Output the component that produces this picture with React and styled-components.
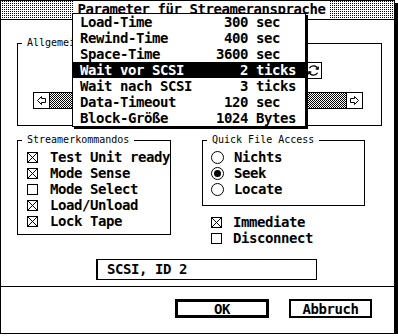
import React from 'react';
import styled, { createGlobalStyle, css } from 'styled-components';

const GlobalStyle = createGlobalStyle`
  html, body {
    margin: 0;
    padding: 0;
    background: #fff;
  }
  body {
    font-family: "DejaVu Sans Mono", "Liberation Mono", monospace;
    color: #000;
  }
`;

// Atari 8x16 system font, approximated
const sysFont = css`
  font-family: "DejaVu Sans Mono", "Liberation Mono", monospace;
  font-weight: bold;
  font-size: 14px;
  letter-spacing: -0.43px;
  line-height: 16px;
`;

const smallFont = css`
  font-family: "DejaVu Sans Mono", "Liberation Mono", monospace;
  font-weight: normal;
  font-size: 10px;
  line-height: 10px;
  letter-spacing: 0;
`;

const dots = css`
  background: conic-gradient(#000 0 25%, #fff 0 100%) 0 0 / 2px 2px;
`;

const checker = css`
  background: repeating-conic-gradient(#000 0 25%, #fff 0 50%) 0 0 / 2px 2px;
`;

const Window = styled.div`
  position: relative;
  width: 395px;
  height: 334px;
  box-sizing: border-box;
  border: 1px solid #000;
  box-shadow: 3px 3px 0 #000;
  background: #fff;
  display: flex;
  flex-direction: column;
`;

const TitleBar = styled.div`
  height: 19px;
  box-sizing: border-box;
  border-bottom: 1px solid #000;
  ${dots};
  display: flex;
  justify-content: center;
`;

const TitleLabel = styled.div`
  ${sysFont};
  height: 18px;
  line-height: 17px;
  padding: 0 4px;
  margin-left: 8px;
  background: #fff;
  white-space: pre;
`;

const Content = styled.div`
  padding-left: 16px;
  display: flex;
  flex-direction: column;
  align-items: flex-start;
`;

const Group = styled.fieldset`
  margin: ${p => p.$top}px 0 0 0;
  padding: 0;
  min-inline-size: 0;
  width: ${p => p.$w}px;
  box-sizing: border-box;
  border: 1px solid #000;
`;

const Legend = styled.legend`
  ${smallFont};
  padding: 0 5px;
  margin-left: 4px;
  white-space: pre;
`;

const GroupBody = styled.div`
  padding: ${p => p.$pad};
  display: flex;
  flex-direction: column;
`;

const PopupRow = styled.div`
  display: flex;
  margin-left: 54px;
`;

const PopupField = styled.div`
  width: 233px;
  height: 17px;
  box-sizing: border-box;
  border: 1px solid #000;
`;

const CycleButton = styled.div`
  width: 17px;
  height: 17px;
  box-sizing: border-box;
  border: 1px solid #000;
  display: flex;
  align-items: center;
  justify-content: center;
`;

const Slider = styled.div`
  display: flex;
  margin: 13px 0 0 15px;
  width: 330px;
  height: 17px;
`;

const ArrowButton = styled.div`
  width: 17px;
  box-sizing: border-box;
  border: 1px solid #000;
  display: flex;
  align-items: center;
  justify-content: center;
`;

const Track = styled.div`
  flex: 1;
  border-top: 1px solid #000;
  border-bottom: 1px solid #000;
  ${checker};
`;

const Columns = styled.div`
  display: flex;
  align-items: flex-start;
`;

const RightColumn = styled.div`
  margin-left: 31px;
  display: flex;
  flex-direction: column;
`;

const OptionRow = styled.div`
  ${sysFont};
  height: 16px;
  display: flex;
  align-items: center;
  gap: ${p => p.$gap}px;
  white-space: pre;
`;

const Extras = styled.div`
  margin: 8px 0 0 9px;
  display: flex;
  flex-direction: column;
`;

const TextField = styled.div`
  ${sysFont};
  margin: 13px 0 0 79px;
  width: 221px;
  height: 21px;
  box-sizing: border-box;
  border: 1px solid #000;
  border-left-width: 2px;
  padding: 1px 0 0 9px;
  white-space: pre;
`;

const ButtonBar = styled.div`
  margin-top: auto;
  height: 47px;
  box-sizing: border-box;
  border-top: 1px solid #000;
  padding: 12px 22px 0 0;
  display: flex;
  justify-content: flex-end;
  align-items: flex-start;
  gap: 20px;
`;

const Button = styled.div`
  ${sysFont};
  width: ${p => p.$w}px;
  height: 19px;
  box-sizing: border-box;
  border: ${p => (p.$default ? 3 : 2)}px solid #000;
  display: flex;
  align-items: center;
  justify-content: center;
  u {
    text-decoration-thickness: 1px;
    text-underline-offset: 2px;
  }
`;

const Menu = styled.div`
  position: absolute;
  left: 71px;
  top: 12px;
  width: 234px;
  box-sizing: border-box;
  border: 1px solid #000;
  box-shadow: 2px 2px 0 #000;
  background: #fff;
  z-index: 2;
`;

const MenuItem = styled.div`
  ${sysFont};
  height: 16px;
  padding-left: 7px;
  white-space: pre;
  background: ${p => (p.$active ? '#000' : '#fff')};
  color: ${p => (p.$active ? '#fff' : '#000')};
`;

const CheckBox = ({ on }) => (
  <svg width="11" height="11" viewBox="0 0 11 11" shapeRendering="crispEdges">
    <rect x="0.5" y="0.5" width="10" height="10" fill="#fff" stroke="#000" />
    {on && (
      <g stroke="#000" strokeWidth="1" shapeRendering="auto">
        <line x1="1" y1="1" x2="10" y2="10" />
        <line x1="10" y1="1" x2="1" y2="10" />
      </g>
    )}
  </svg>
);

const Radio = ({ on }) => (
  <svg width="13" height="13" viewBox="0 0 13 13">
    <circle cx="6.5" cy="6.5" r="6" fill="#fff" stroke="#000" />
    {on && <circle cx="6.5" cy="6.5" r="3.5" fill="#000" />}
  </svg>
);

const Arrow = ({ dir }) => (
  <svg width="9" height="9" viewBox="0 0 9 9" style={dir === 'right' ? { transform: 'scaleX(-1)' } : undefined}>
    <polygon points="0.5,4.5 4.5,0.5 4.5,2.5 8.5,2.5 8.5,6.5 4.5,6.5 4.5,8.5" fill="#fff" stroke="#000" strokeLinejoin="miter" />
  </svg>
);

const CycleIcon = () => (
  <svg width="13" height="13" viewBox="0 0 13 13" fill="none" stroke="#000" strokeWidth="1.3">
    <path d="M10.8 5 A4.6 4.6 0 0 0 2.4 4.2" />
    <path d="M2.2 8 A4.6 4.6 0 0 0 10.6 8.8" />
    <path d="M8.6 4.9 L11 5.2 L11.4 2.6" />
    <path d="M4.4 8.1 L2 7.8 L1.6 10.4" />
  </svg>
);

const menuItems = [
  ['Load-Time', '300', 'sec'],
  ['Rewind-Time', '400', 'sec'],
  ['Space-Time', '3600', 'sec'],
  ['Wait vor SCSI', '2', 'ticks'],
  ['Wait nach SCSI', '3', 'ticks'],
  ['Data-Timeout', '120', 'sec'],
  ['Block-Größe', '1024', 'Bytes'],
];

const fmt = ([name, value, unit]) => `${name.padEnd(17)}${value.padStart(4)} ${unit}`;

const commands = [
  ['Test Unit ready', true],
  ['Mode Sense', true],
  ['Mode Select', false],
  ['Load/Unload', true],
  ['Lock Tape', true],
];

const access = [
  ['Nichts', false],
  ['Seek', true],
  ['Locate', false],
];

const extras = [
  ['Immediate', true],
  ['Disconnect', false],
];

const App = () => {
  const active = 3;
  return (
    <>
      <GlobalStyle />
      <Window>
        <TitleBar>
          <TitleLabel>Parameter für Streameransprache</TitleLabel>
        </TitleBar>
        <Content>
          <Group $top={18} $w={365}>
            <Legend>Allgemeine Parameter</Legend>
            <GroupBody $pad="14px 0 16px 0">
              {/* popup button, hidden under the open menu */}
              <PopupRow>
                <PopupField />
                <CycleButton>
                  <CycleIcon />
                </CycleButton>
              </PopupRow>
              <Slider>
                <ArrowButton>
                  <Arrow dir="left" />
                </ArrowButton>
                <Track />
                <ArrowButton>
                  <Arrow dir="right" />
                </ArrowButton>
              </Slider>
            </GroupBody>
          </Group>
          <Columns>
            <Group $top={9} $w={154}>
              <Legend>Streamerkommandos</Legend>
              <GroupBody $pad="4px 0 5px 9px">
                {commands.map(([label, on]) => (
                  <OptionRow key={label} $gap={12}>
                    <CheckBox on={on} />
                    {label}
                  </OptionRow>
                ))}
              </GroupBody>
            </Group>
            <RightColumn>
              <Group $top={9} $w={163}>
                <Legend>Quick File Access</Legend>
                <GroupBody $pad="4px 0 8px 8px">
                  {access.map(([label, on]) => (
                    <OptionRow key={label} $gap={10}>
                      <Radio on={on} />
                      {label}
                    </OptionRow>
                  ))}
                </GroupBody>
              </Group>
              <Extras>
                {extras.map(([label, on]) => (
                  <OptionRow key={label} $gap={11}>
                    <CheckBox on={on} />
                    {label}
                  </OptionRow>
                ))}
              </Extras>
            </RightColumn>
          </Columns>
          <TextField>SCSI, ID 2</TextField>
        </Content>
        <ButtonBar>
          <Button $w={94} $default>OK</Button>
          <Button $w={83}>
            <span>
              <u>A</u>bbruch
            </span>
          </Button>
        </ButtonBar>
        <Menu>
          {menuItems.map((item, i) => (
            <MenuItem key={item[0]} $active={i === active}>
              {fmt(item)}
            </MenuItem>
          ))}
        </Menu>
      </Window>
    </>
  );
};

export default App;
